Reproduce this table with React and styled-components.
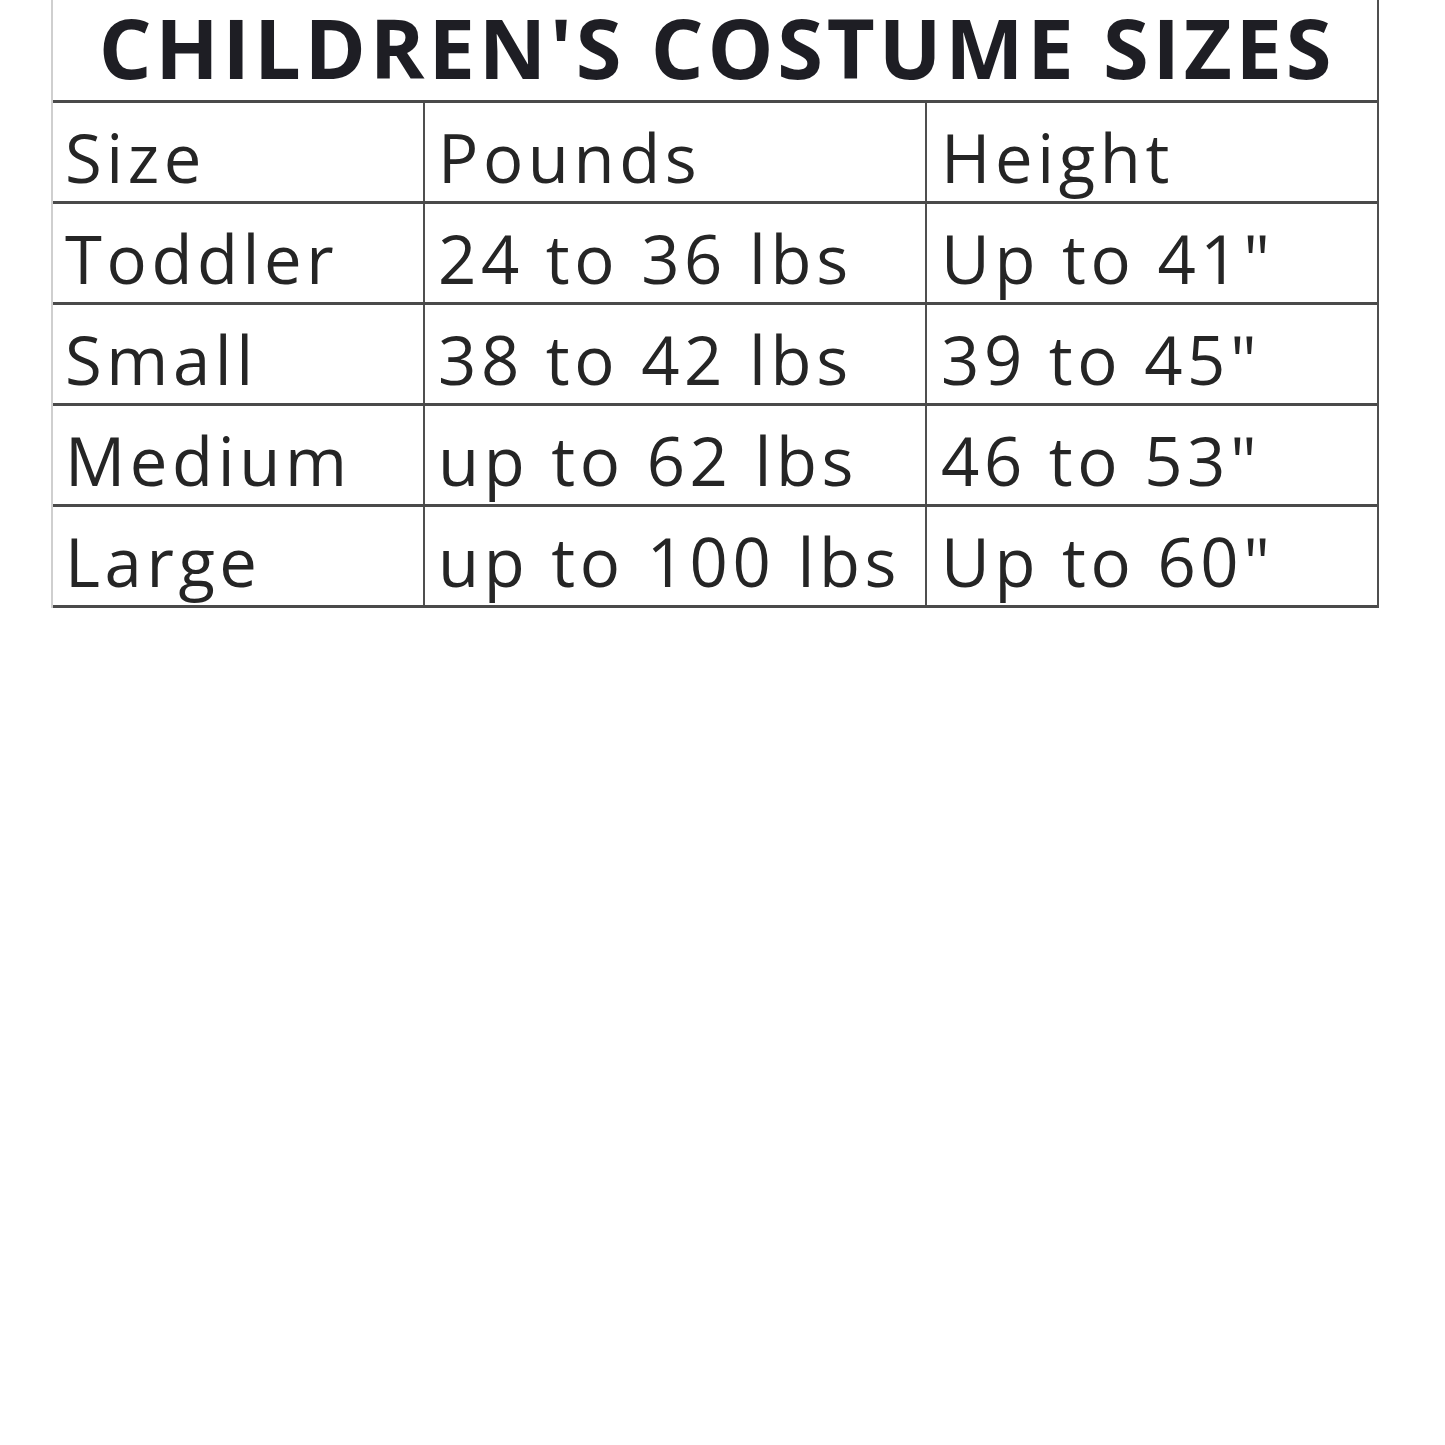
import React from 'react'
import styled, { createGlobalStyle } from 'styled-components'

const GlobalStyle = createGlobalStyle`
  html, body {
    margin: 0;
    padding: 0;
    background: #fff;
  }
  body {
    font-family: 'Open Sans', 'Liberation Sans', sans-serif;
    color: #252525;
  }
`

const Page = styled.div`
  width: 1445px;
  height: 1445px;
  padding-left: 51px;
  box-sizing: border-box;
  background: #fff;
`

const Table = styled.div`
  width: 1328px;
  box-sizing: border-box;
  border-left: 2px solid #cfcfcf;
  border-right: 2px solid #4f4f4f;
`

const Title = styled.div`
  height: 103px;
  border-bottom: 3px solid #4a4a4a;
  display: flex;
  align-items: center;
  justify-content: center;
  font-weight: 700;
  font-size: 83px;
  line-height: 1.12;
  letter-spacing: 3.8px;
  color: #1e1e24;
  white-space: nowrap;
  padding: 0 0 6px 4px;
  box-sizing: border-box;
`

const Row = styled.div`
  display: grid;
  grid-template-columns: 372px 502px 1fr;
  height: 101px;
  border-bottom: 3px solid #4a4a4a;
  box-sizing: border-box;
`

const Cell = styled.div`
  display: flex;
  align-items: center;
  padding-left: ${p => p.$pad}px;
  padding-top: 10px;
  font-size: 67px;
  line-height: 1.2;
  letter-spacing: 4.6px;
  white-space: nowrap;
  border-right: ${p => (p.$last ? 'none' : '2px solid #4f4f4f')};
`

const rows = [
  ['Size', 'Pounds', 'Height'],
  ['Toddler', '24 to 36 lbs', 'Up to 41"'],
  ['Small', '38 to 42 lbs', '39 to 45"'],
  ['Medium', 'up to 62 lbs', '46 to 53"'],
  ['Large', 'up to 100 lbs', 'Up to 60"'],
]

const pads = [12, 13, 14]

export default function App() {
  return (
    <Page>
      <GlobalStyle />
      <Table>
        <Title>CHILDREN'S COSTUME SIZES</Title>
        {rows.map((r, i) => (
          <Row key={i}>
            {r.map((c, j) => (
              <Cell key={j} $pad={pads[j]} $last={j === 2}>{c}</Cell>
            ))}
          </Row>
        ))}
      </Table>
    </Page>
  )
}
